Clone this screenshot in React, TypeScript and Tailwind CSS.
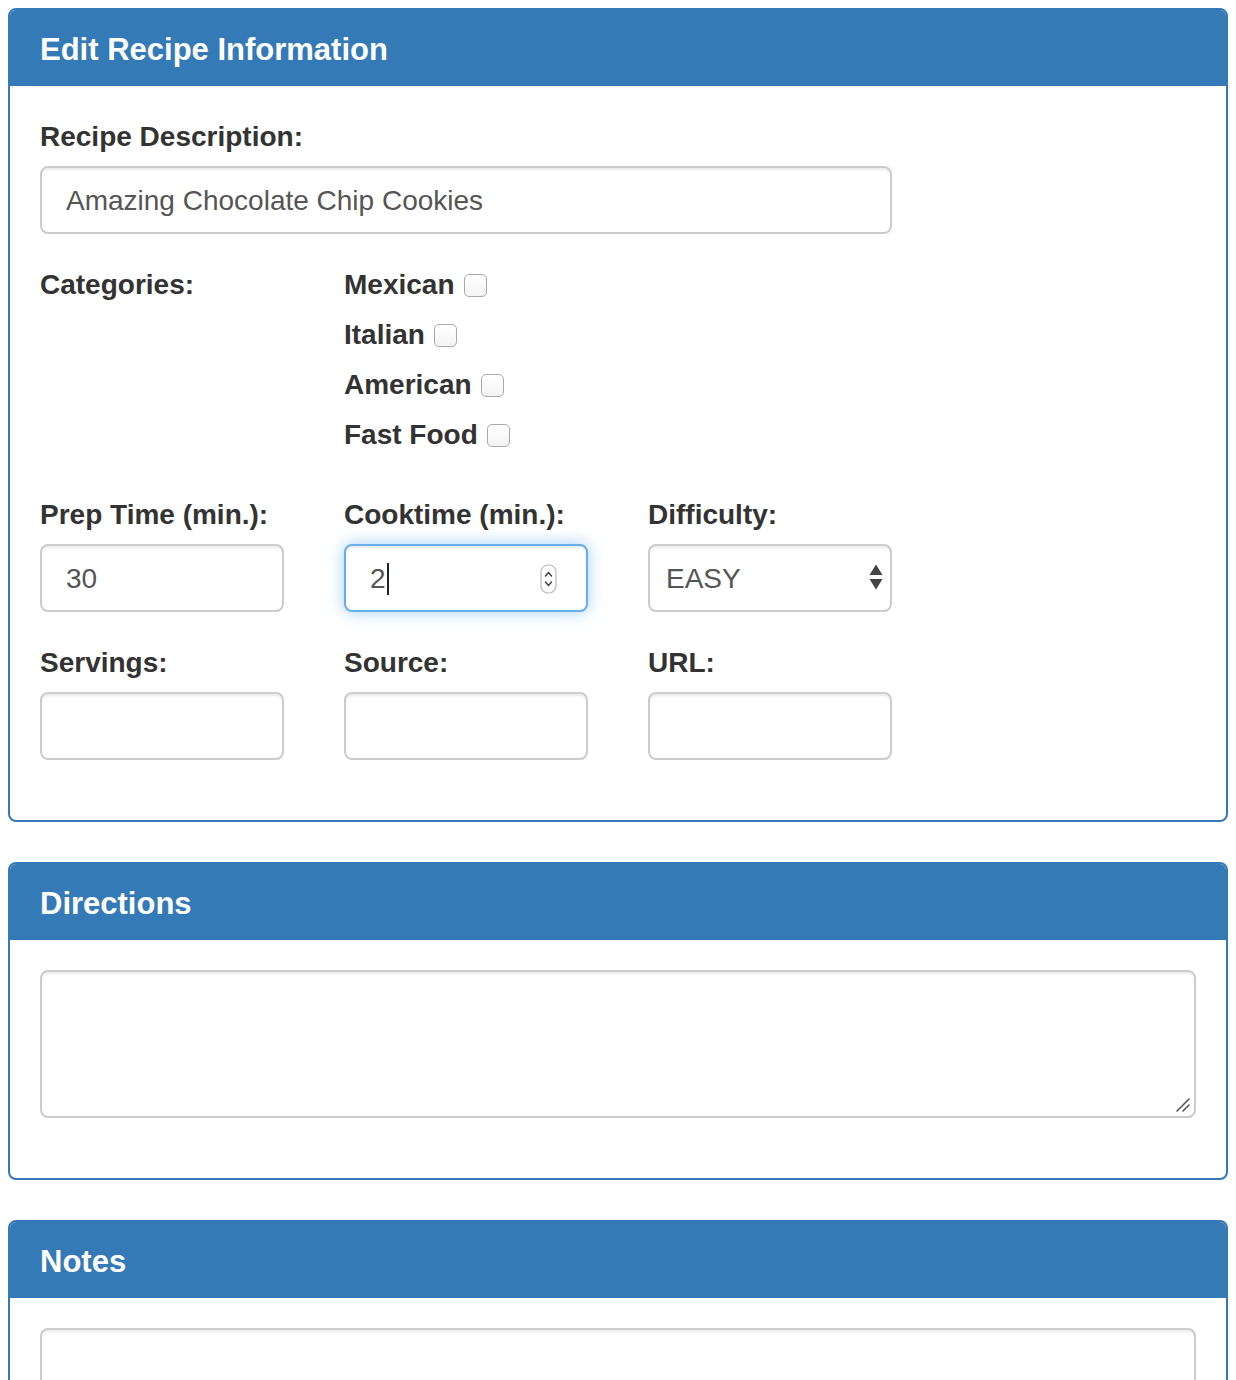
import React from 'react';

const font = { fontFamily: '"Liberation Sans", Arial, Helvetica, sans-serif' };

const Panel: React.FC<{ title: string; children: React.ReactNode }> = ({ title, children }) => (
  <div className="mb-[40px] rounded-[8px] border-2 border-[#337ab7] bg-white">
    <div className="rounded-t-[6px] bg-[#337ab7] px-[30px] pt-[22px] pb-[19px]">
      <h3 className="text-[31px] font-bold leading-[35px] text-white">{title}</h3>
    </div>
    <div className="px-[30px] pt-[30px] pb-[30px]">{children}</div>
  </div>
);

const Label: React.FC<{ children: React.ReactNode }> = ({ children }) => (
  <label className="mb-[10px] block pt-[1px] text-[28px] font-bold leading-[39px] text-[#333]">{children}</label>
);

const inputCls =
  'block h-[68px] w-full rounded-[8px] border-2 border-[#ccc] bg-white px-[24px] pt-[1px] text-[28px] text-[#555] shadow-[inset_0_2px_2px_rgba(0,0,0,0.075)] outline-none';

const Checkbox: React.FC<{ label: string }> = ({ label }) => (
  <div className="flex h-[40px] items-center text-[28px] font-bold text-[#333]">
    <span>{label}</span>
    <span className="ml-[9px] inline-block h-[23px] w-[23px] rounded-[5px] border-[1.5px] border-[#a9a9a9] bg-gradient-to-b from-white to-[#f4f4f4]" />
  </div>
);

const TextField: React.FC<{ label: string; value?: string }> = ({ label, value }) => (
  <div className="w-[304px] px-[30px]">
    <Label>{label}</Label>
    <input className={inputCls} defaultValue={value} />
  </div>
);

const TextArea: React.FC = () => (
  <div className="relative mb-[30px]">
    <textarea className="block h-[148px] w-full resize-none rounded-[8px] border-2 border-[#ccc] px-[24px] py-[12px] text-[28px] text-[#555] shadow-[inset_0_2px_2px_rgba(0,0,0,0.075)] outline-none" />
    <svg className="pointer-events-none absolute bottom-[4px] right-[4px]" width="18" height="18" viewBox="0 0 18 18">
      <path d="M3 15 L15 3" stroke="#555" strokeWidth="1.6" strokeLinecap="round" />
      <path d="M9 15 L15 9" stroke="#555" strokeWidth="1.6" strokeLinecap="round" />
    </svg>
  </div>
);

const App: React.FC = () => {
  return (
    <div className="min-h-[1380px] bg-white px-[8px] pt-[8px]" style={font}>
      <Panel title="Edit Recipe Information">
        <div className="-mx-[30px]">
          {/* Description */}
          <div className="mb-[30px] w-[912px] px-[30px]">
            <Label>Recipe Description:</Label>
            <input className={inputCls} defaultValue="Amazing Chocolate Chip Cookies" />
          </div>

          {/* Categories */}
          <div className="mb-[39px] flex">
            <div className="w-[304px] px-[30px]">
              <div className="pt-[1px] text-[28px] font-bold leading-[39px] text-[#333]">Categories:</div>
            </div>
            <div className="flex flex-col gap-[10px] px-[30px] pt-[1px]">
              <Checkbox label="Mexican" />
              <Checkbox label="Italian" />
              <Checkbox label="American" />
              <Checkbox label="Fast Food" />
            </div>
          </div>

          {/* Prep / Cook / Difficulty */}
          <div className="mb-[30px] flex">
            <TextField label="Prep Time (min.):" value="30" />
            <div className="w-[304px] px-[30px]">
              <Label>Cooktime (min.):</Label>
              <div className="flex h-[68px] w-full items-center rounded-[8px] border-2 border-[#66afe9] bg-white pl-[24px] pr-[29px] pt-[1px] text-[28px] text-[#555] shadow-[inset_0_2px_2px_rgba(0,0,0,0.075),0_0_16px_rgba(102,175,233,0.6)]">
                <span>2</span>
                <span className="ml-[1px] inline-block h-[32px] w-[2px] bg-[#222]" />
                <svg className="ml-auto" width="17" height="30" viewBox="0 0 17 30">
                  <rect x="1" y="1" width="15" height="28" rx="7" fill="#fff" stroke="#b8b8b8" strokeWidth="1.2" />
                  <path d="M5.5 12 L8.5 8.5 L11.5 12" fill="none" stroke="#444" strokeWidth="1.5" strokeLinecap="round" strokeLinejoin="round" />
                  <path d="M5.5 18 L8.5 21.5 L11.5 18" fill="none" stroke="#444" strokeWidth="1.5" strokeLinecap="round" strokeLinejoin="round" />
                </svg>
              </div>
            </div>
            <div className="w-[304px] px-[30px]">
              <Label>Difficulty:</Label>
              <div className="relative">
                <select className={`${inputCls} appearance-none pl-[16px]`} defaultValue="EASY">
                  <option>EASY</option>
                  <option>MEDIUM</option>
                  <option>HARD</option>
                </select>
                <svg className="pointer-events-none absolute right-[8px] top-[19px]" width="16" height="28" viewBox="0 0 16 28">
                  <path d="M1.5 12 L8 1.5 L14.5 12 Z" fill="#444" />
                  <path d="M1.5 16 L8 26.5 L14.5 16 Z" fill="#444" />
                </svg>
              </div>
            </div>
          </div>

          {/* Servings / Source / URL */}
          <div className="mb-[30px] flex">
            <TextField label="Servings:" />
            <TextField label="Source:" />
            <TextField label="URL:" />
          </div>
        </div>
      </Panel>

      <Panel title="Directions">
        <TextArea />
      </Panel>

      <Panel title="Notes">
        <TextArea />
      </Panel>
    </div>
  );
};

export default App;
